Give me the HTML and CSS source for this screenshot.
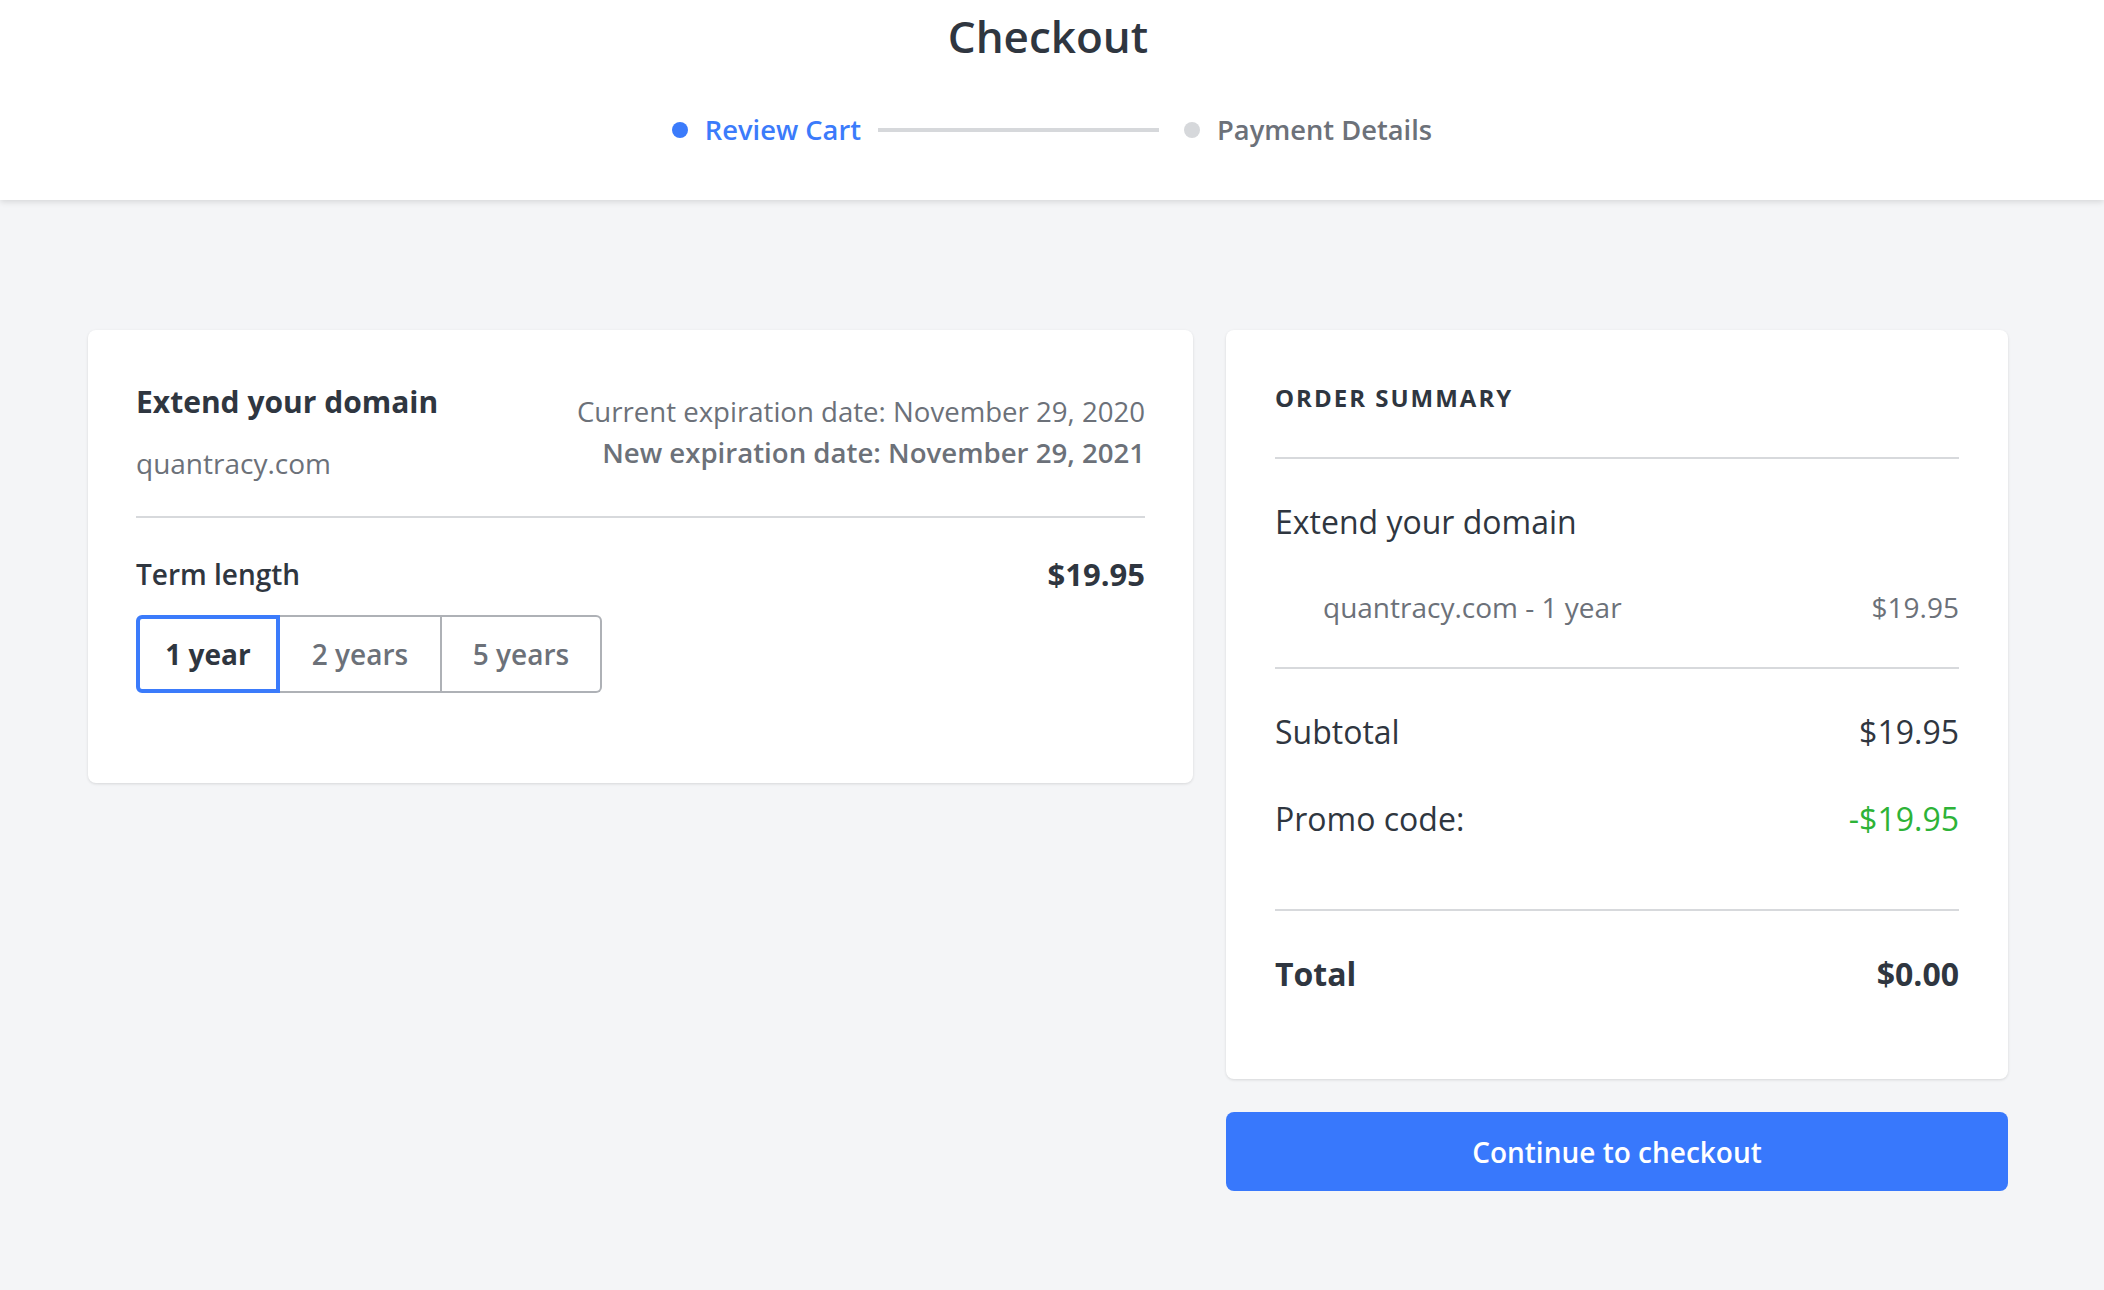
FILE: index.html
```html
<!DOCTYPE html>
<html lang="en">
<head>
<meta charset="utf-8">
<title>Checkout</title>
<link rel="stylesheet" href="styles.css">
</head>
<body>
<header class="topbar">
  <h1 class="title">Checkout</h1>
  <nav class="steps">
    <div class="step step-active"><span class="dot"></span><span class="step-label">Review Cart</span></div>
    <span class="step-line"></span>
    <div class="step"><span class="dot"></span><span class="step-label">Payment Details</span></div>
  </nav>
</header>
<main class="layout">
  <section class="card product">
    <div class="product-head">
      <div class="product-info">
        <h2 class="product-title">Extend your domain</h2>
        <div class="product-domain">quantracy.com</div>
      </div>
      <div class="product-dates">
        <div class="date-current">Current expiration date: November 29, 2020</div>
        <div class="date-new">New expiration date: November 29, 2021</div>
      </div>
    </div>
    <div class="term">
      <div class="term-row">
        <span class="term-label">Term length</span>
        <span class="term-price">$19.95</span>
      </div>
      <div class="segmented">
        <button class="seg seg-first seg-selected">1 year</button>
        <button class="seg seg-mid">2 years</button>
        <button class="seg seg-last">5 years</button>
      </div>
    </div>
  </section>
  <aside class="side">
    <section class="card summary">
      <h3 class="summary-title">ORDER SUMMARY</h3>
      <div class="summary-block">
        <div class="summary-name">Extend your domain</div>
        <div class="summary-item"><span>quantracy.com - 1 year</span><span>$19.95</span></div>
      </div>
      <div class="summary-block totals">
        <div class="line"><span>Subtotal</span><span>$19.95</span></div>
        <div class="line line-promo"><span>Promo code:</span><span class="discount">-$19.95</span></div>
      </div>
      <div class="summary-block total">
        <div class="line line-total"><span>Total</span><span>$0.00</span></div>
      </div>
    </section>
    <button class="cta">Continue to checkout</button>
  </aside>
</main>
</body>
</html>
```
FILE: styles.css
```css
* { box-sizing: border-box; }
html, body { margin: 0; padding: 0; }
body {
  background: #f4f5f7;
  font-family: "Open Sans", "Noto Sans", sans-serif;
  color: #2f3640;
  min-height: 1290px;
}
.topbar {
  background: #fff;
  height: 200px;
  padding-top: 6px;
  box-shadow: 0 2px 6px rgba(0, 0, 0, 0.12);
  display: flex;
  flex-direction: column;
  align-items: center;
}
.title {
  margin: 0;
  padding-right: 8px;
  font-size: 44px;
  line-height: 60px;
  font-weight: 600;
  color: #2f3640;
}
.steps {
  margin-top: 44px;
  height: 40px;
  display: flex;
  align-items: center;
}
.step {
  display: flex;
  align-items: center;
  gap: 17px;
  font-size: 27.3px;
  line-height: 40px;
  font-weight: 600;
  color: #6c7179;
}
.dot {
  width: 16px;
  height: 16px;
  border-radius: 50%;
  background: #d6d8db;
}
.step-active { color: #3b7bfb; }
.step-active .dot { background: #3b7bfb; }
.step-line {
  width: 281px;
  height: 4px;
  background: #d6d8db;
  margin: 0 25px 0 17px;
}
.layout {
  display: grid;
  grid-template-columns: 1105px 782px;
  column-gap: 33px;
  align-items: start;
  padding: 130px 0 0 88px;
}
.card {
  background: #fff;
  border-radius: 8px;
  box-shadow: 0 1px 3px rgba(0, 0, 0, 0.12);
}
.product { padding: 52px 48px 90px; }
.product-head {
  display: flex;
  justify-content: space-between;
  align-items: flex-start;
  padding-bottom: 33px;
  border-bottom: 2px solid #d7d9dc;
}
.product-title {
  margin: 0;
  font-size: 30px;
  line-height: 40px;
  font-weight: 700;
  color: #2f3640;
}
.product-domain {
  margin-top: 21px;
  font-size: 28px;
  line-height: 40px;
  color: #6c7179;
}
.product-dates {
  margin-top: 9px;
  text-align: right;
  font-size: 27.6px;
  line-height: 41px;
  color: #6c7179;
}
.date-new { font-weight: 600; }
.term { padding-top: 36px; }
.term-row {
  display: flex;
  justify-content: space-between;
  align-items: flex-start;
}
.term-label {
  font-size: 28px;
  line-height: 40px;
  font-weight: 600;
}
.term-price {
  font-size: 31px;
  line-height: 40px;
  font-weight: 700;
}
.segmented {
  margin-top: 21px;
  display: flex;
}
.seg {
  height: 78px;
  background: #fff;
  font-family: inherit;
  font-size: 28px;
  font-weight: 600;
  color: #6c7179;
  border: 2px solid #aeb1b6;
  border-left: none;
  padding: 0;
}
.seg-first {
  width: 144px;
  border: 4px solid #3b7bfb;
  border-radius: 6px 0 0 6px;
  color: #2f3640;
  font-weight: 700;
}
.seg-mid { width: 162px; }
.seg-last { width: 160px; border-radius: 0 6px 6px 0; }
.side {
  display: flex;
  flex-direction: column;
  gap: 33px;
}
.summary { padding: 52px 49px 83px 49px; }
.summary-title {
  margin: 0;
  font-size: 24px;
  line-height: 32px;
  font-weight: 700;
  letter-spacing: 2px;
  color: #2f3640;
  padding-bottom: 43px;
  border-bottom: 2px solid #d7d9dc;
}
.summary-block { padding-top: 41px; }
.summary-name {
  font-size: 32px;
  line-height: 44px;
}
.summary-item {
  margin-top: 43px;
  padding: 0 0 40px 48px;
  border-bottom: 2px solid #d7d9dc;
  display: flex;
  justify-content: space-between;
  font-size: 28px;
  line-height: 40px;
  color: #6c7179;
}
.line {
  display: flex;
  justify-content: space-between;
  font-size: 32px;
  line-height: 44px;
}
.line-promo { margin-top: 43px; }
.totals {
  padding-bottom: 68px;
  border-bottom: 2px solid #d7d9dc;
}
.discount { color: #2db337; }
.line-total { font-weight: 700; }
.cta {
  height: 79px;
  border: none;
  border-radius: 8px;
  background: #3878fc;
  color: #fff;
  font-family: inherit;
  font-size: 28px;
  font-weight: 600;
}
```
